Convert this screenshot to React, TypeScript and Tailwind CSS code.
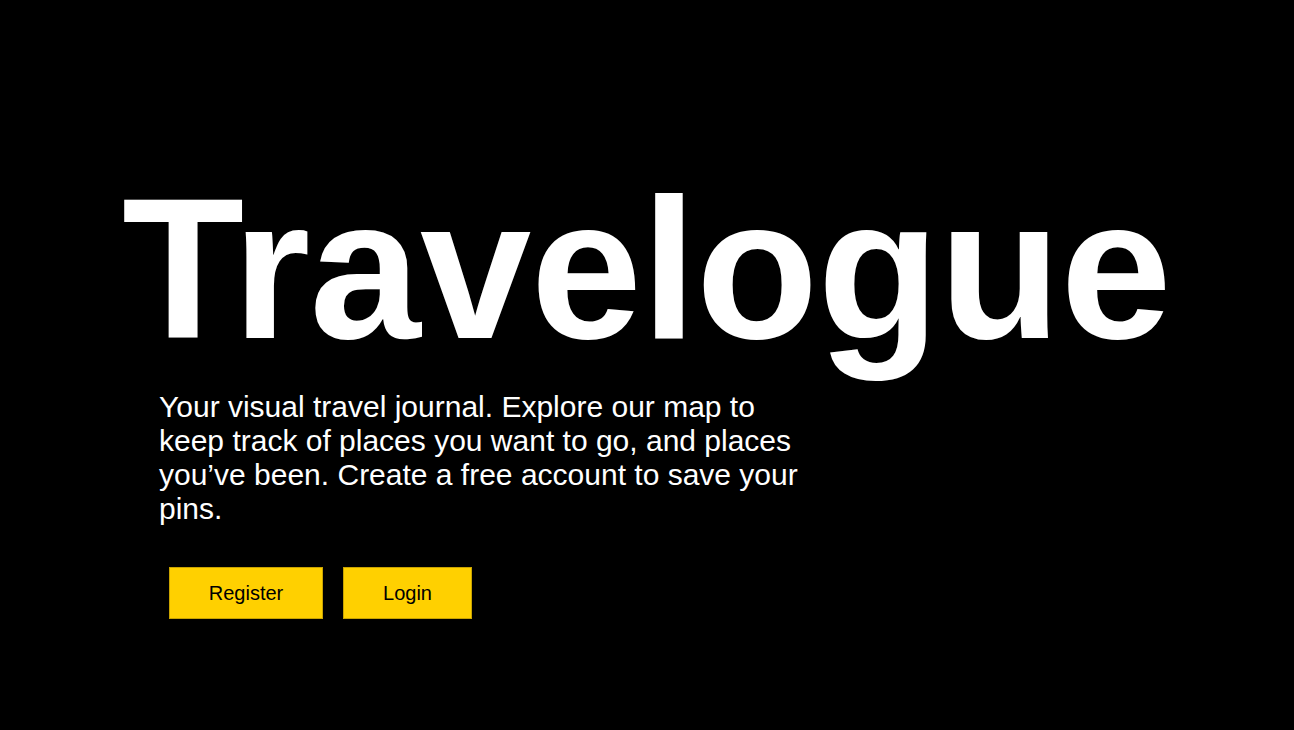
import React from 'react';

export default function App() {
  return (
    <div className="min-h-screen w-full bg-black text-white" style={{ fontFamily: '"Liberation Sans", Arial, sans-serif' }}>
      <div className="pl-[122px] pt-[169px]">
        <h1 className="text-[200px] font-bold leading-none tracking-[-0.7px]">Travelogue</h1>
        <div className="pl-[37px] pt-[21px]">
          <p className="w-[650px] text-[30px] leading-[34px]">
            Your visual travel journal. Explore our map to keep track of places you want to go, and places you’ve been. Create a free account to save your pins.
          </p>
          <div className="mt-[41px] ml-[10px] flex gap-[20px]">
            <button className="h-[52px] w-[154px] border border-[#c9a300] bg-[#ffd000] text-[20px] text-black">Register</button>
            <button className="h-[52px] w-[129px] border border-[#c9a300] bg-[#ffd000] text-[20px] text-black">Login</button>
          </div>
        </div>
      </div>
    </div>
  );
}
